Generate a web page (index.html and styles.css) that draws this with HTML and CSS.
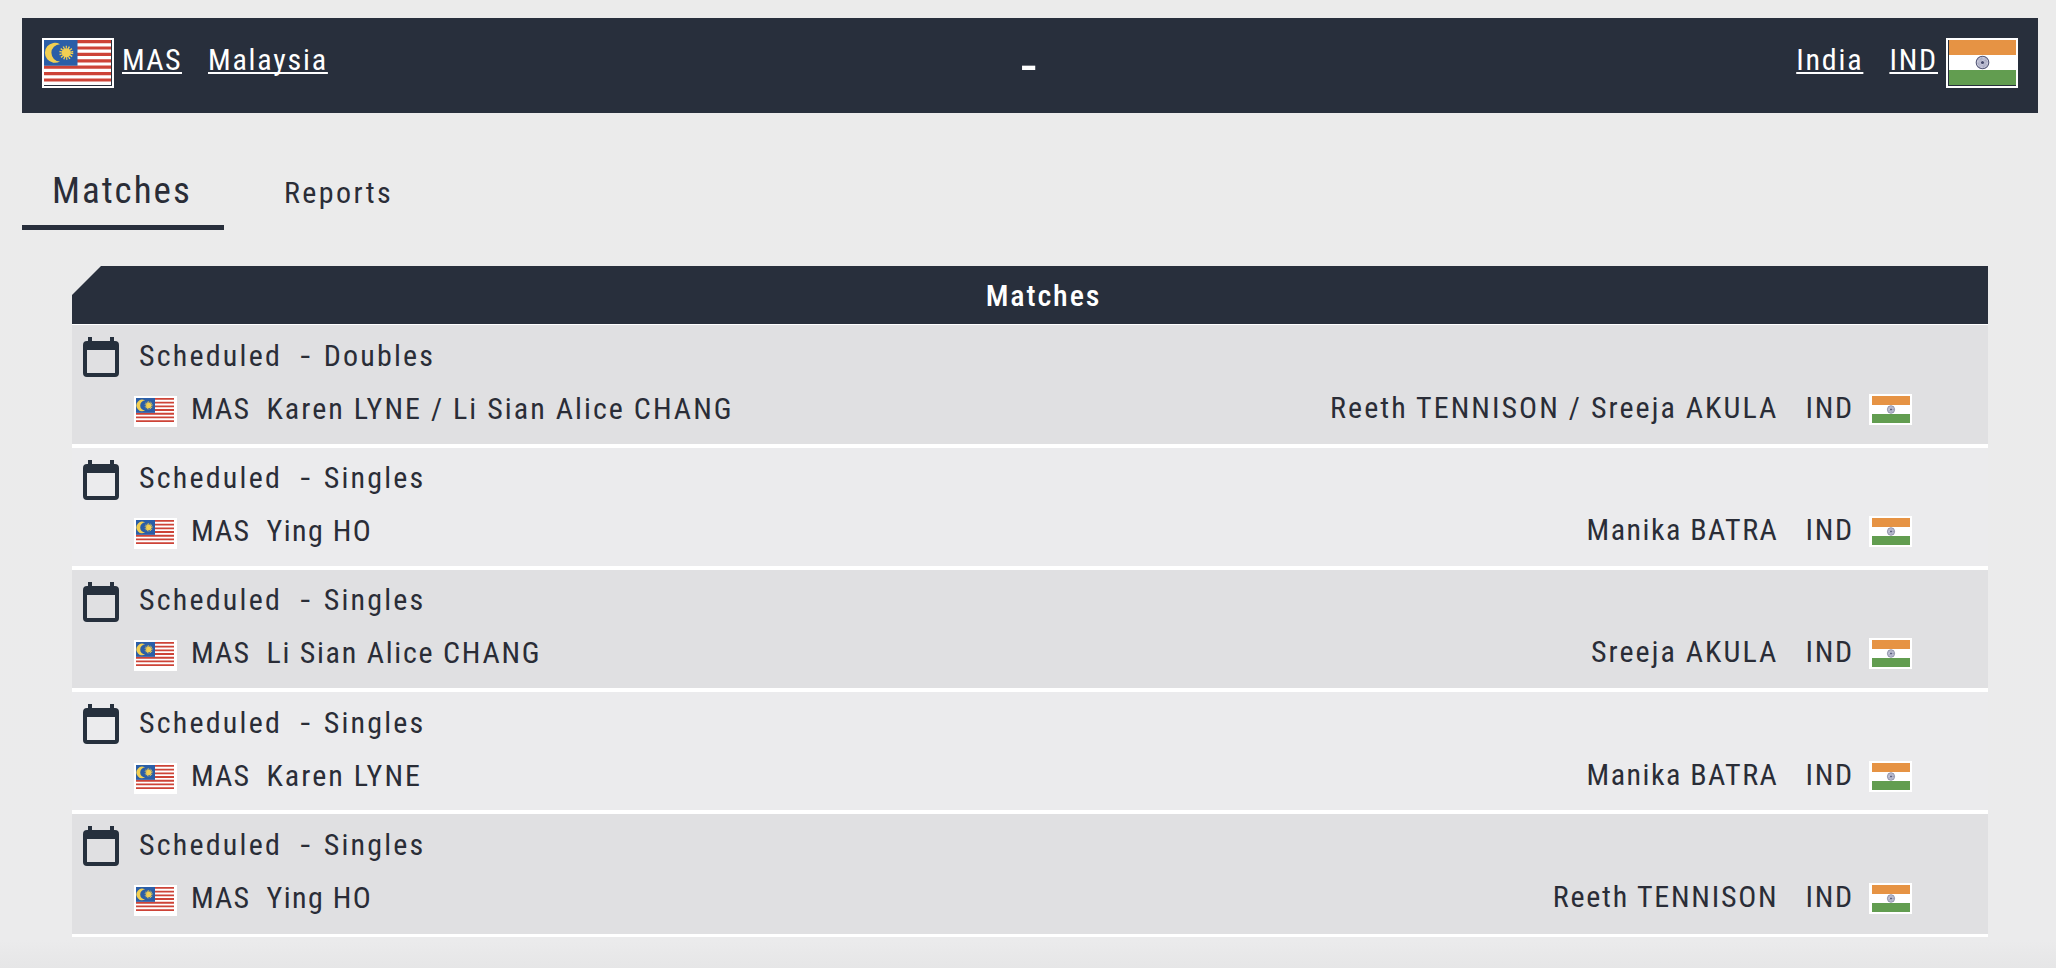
FILE: index.html
```
<!DOCTYPE html>
<html>
<head>
    <meta charset="UTF-8">
    <title>Malaysia - India</title>
    <link rel="stylesheet" href="styles.css">
</head>
<body>
    <!-- Shared icons -->
    <svg class="defs">
        <symbol id="mas" viewBox="0 0 67 45" preserveAspectRatio="none">
            <rect width="67" height="45" fill="#fff"/>
            <path d="M0 1.6H67M0 8H67M0 14.4H67M0 20.8H67M0 27.2H67M0 33.6H67M0 40H67" stroke="#cd4337" stroke-width="3.2"/>
            <rect width="33.5" height="25.7" fill="#2b5ea7"/>
            <path d="M16 4.2A10 10 0 1 0 16 21.4A8.6 8.6 0 1 1 16 4.2Z" fill="#f2cf52"/>
            <circle cx="22.3" cy="12.8" r="4.6" fill="#f2cf52"/>
            <circle cx="22.3" cy="12.8" r="5.6" fill="none" stroke="#f2cf52" stroke-width="2.8" stroke-dasharray="1.2 1.313"/>
        </symbol>
        <symbol id="ind" viewBox="0 0 67 45" preserveAspectRatio="none">
            <rect width="67" height="45" fill="#fff"/>
            <rect width="67" height="15" fill="#e69344"/>
            <rect y="30" width="67" height="15" fill="#629d50"/>
            <circle cx="33.5" cy="22.5" r="6.3" fill="#dadbe8" stroke="#555878" stroke-width="1.1"/>
            <circle cx="33.5" cy="22.5" r="3.6" fill="none" stroke="#9698b4" stroke-width="3.4" stroke-dasharray=".6 .5"/>
            <circle cx="33.5" cy="22.5" r="1.6" fill="#45496c"/>
        </symbol>
        <symbol id="calendar" viewBox="0 0 36 40">
            <path d="M5 0h4v4h18V0h4v4h1a4 4 0 0 1 4 4v28a4 4 0 0 1-4 4H4a4 4 0 0 1-4-4V8a4 4 0 0 1 4-4h1zM4 13v23h28V13z" fill="#26303d" fill-rule="evenodd"/>
        </symbol>
    </svg>

    <div class="header">
        <div class="team">
            <svg class="flag-big"><use href="#mas"/></svg>
            <a class="team-code">MAS</a>
            <a class="team-name">Malaysia</a>
        </div>
        <div class="result">-</div>
        <div class="team away">
            <a class="team-name">India</a>
            <a class="team-code">IND</a>
            <svg class="flag-big"><use href="#ind"/></svg>
        </div>
    </div>

    <div class="tabs">
        <div class="tab active">Matches</div>
        <div class="tab">Reports</div>
    </div>

    <div class="matches">
        <div class="matches-title">Matches</div>
        <!-- Match 1 -->
        <div class="match">
            <svg class="calendar"><use href="#calendar"/></svg>
            <div class="match-info">
                <div class="status"><span>Scheduled</span><span class="dash">-</span><span>Doubles</span></div>
                <div class="players">
                    <svg class="flag"><use href="#mas"/></svg>
                    <span class="code">MAS</span>
                    <span class="name">Karen LYNE / Li Sian Alice CHANG</span>
                    <span class="name right">Reeth TENNISON / Sreeja AKULA</span>
                    <span class="code right">IND</span>
                    <svg class="flag right"><use href="#ind"/></svg>
                </div>
            </div>
        </div>
        <!-- Match 2 -->
        <div class="match">
            <svg class="calendar"><use href="#calendar"/></svg>
            <div class="match-info">
                <div class="status"><span>Scheduled</span><span class="dash">-</span><span>Singles</span></div>
                <div class="players">
                    <svg class="flag"><use href="#mas"/></svg>
                    <span class="code">MAS</span>
                    <span class="name tight">Ying HO</span>
                    <span class="name right tight">Manika BATRA</span>
                    <span class="code right">IND</span>
                    <svg class="flag right"><use href="#ind"/></svg>
                </div>
            </div>
        </div>
        <!-- Match 3 -->
        <div class="match">
            <svg class="calendar"><use href="#calendar"/></svg>
            <div class="match-info">
                <div class="status"><span>Scheduled</span><span class="dash">-</span><span>Singles</span></div>
                <div class="players">
                    <svg class="flag"><use href="#mas"/></svg>
                    <span class="code">MAS</span>
                    <span class="name medium">Li Sian Alice CHANG</span>
                    <span class="name right">Sreeja AKULA</span>
                    <span class="code right">IND</span>
                    <svg class="flag right"><use href="#ind"/></svg>
                </div>
            </div>
        </div>
        <!-- Match 4 -->
        <div class="match">
            <svg class="calendar"><use href="#calendar"/></svg>
            <div class="match-info">
                <div class="status"><span>Scheduled</span><span class="dash">-</span><span>Singles</span></div>
                <div class="players">
                    <svg class="flag"><use href="#mas"/></svg>
                    <span class="code">MAS</span>
                    <span class="name">Karen LYNE</span>
                    <span class="name right tight">Manika BATRA</span>
                    <span class="code right">IND</span>
                    <svg class="flag right"><use href="#ind"/></svg>
                </div>
            </div>
        </div>
        <!-- Match 5 -->
        <div class="match">
            <svg class="calendar"><use href="#calendar"/></svg>
            <div class="match-info">
                <div class="status"><span>Scheduled</span><span class="dash">-</span><span>Singles</span></div>
                <div class="players">
                    <svg class="flag"><use href="#mas"/></svg>
                    <span class="code">MAS</span>
                    <span class="name tight">Ying HO</span>
                    <span class="name right medium">Reeth TENNISON</span>
                    <span class="code right">IND</span>
                    <svg class="flag right"><use href="#ind"/></svg>
                </div>
            </div>
        </div>
    </div>
</body>
</html>
```
FILE: styles.css
```
* {
    box-sizing: border-box;
}
body {
    margin: 0;
    padding: 18px 18px 0 22px;
    height: 968px;
    overflow: hidden;
    background: linear-gradient(#ebebeb, #ebebec 940px, #e6e6e7);
    color: #2a2d37;
    font-family: "Roboto Condensed", Roboto, sans-serif;
    font-stretch: 75%;
    font-size: 30px;
    letter-spacing: 1.8px;
    white-space: nowrap;
}
.defs {
    display: block;
    width: 0;
    height: 0;
}

/* Top bar */
.header {
    display: grid;
    grid-template-columns: 1fr auto 1fr;
    height: 95px;
    padding: 20px;
    background-color: #282f3c;
    color: white;
}
.team {
    display: flex;
    align-items: flex-start;
    line-height: 44px;
}
.away {
    justify-content: flex-end;
}
.team a {
    text-decoration: underline;
    text-decoration-thickness: 2px;
    text-underline-offset: 2px;
    text-decoration-skip-ink: none;
}
.flag-big {
    width: 72px;
    height: 50px;
    border: 2px solid white;
    padding: 0 1px 1px 0;
}
.team-code {
    margin-left: 8px;
    letter-spacing: 1.4px;
}
.team-name {
    margin-left: 26px;
    letter-spacing: 1.8px;
}
.away .team-code {
    margin-left: 26px;
    margin-right: 8px;
    letter-spacing: 1.8px;
}
.away .flag-big {
    padding: 0 0 1px 1px;
}
.result {
    margin-right: 3px;
    font-size: 44px;
    font-weight: 500;
    line-height: 56px;
    letter-spacing: 0;
    transform: scaleX(1.35);
}

/* Tabs */
.tabs {
    display: flex;
    height: 117px;
}
.tab {
    height: 117px;
    padding: 57px 0 0 60px;
    line-height: 46px;
    letter-spacing: 2.4px;
}
.tab.active {
    width: 202px;
    padding: 55px 0 0 30px;
    border-bottom: 5px solid #282f3c;
    font-size: 37px;
    letter-spacing: 2px;
}

/* Match list */
.matches {
    width: 1916px;
    margin: 36px 0 0 50px;
}
.matches-title {
    height: 58px;
    padding-left: 27px;
    background-color: #282f3c;
    clip-path: polygon(29px 0, 100% 0, 100% 100%, 0 100%, 0 29px);
    color: white;
    font-weight: 500;
    text-align: center;
    line-height: 60px;
    letter-spacing: 1.9px;
}
.match {
    display: flex;
    height: 122.3px;
    padding-left: 11px;
    border-bottom: 4px solid white;
    background-color: #ebebed;
}
.match:nth-child(even) {
    background-color: #e0e0e2;
}
.match:nth-child(2) {
    height: 123.5px;
    border-top: 1px solid white;
}
.match:last-child {
    border-bottom-width: 3px;
}
.calendar {
    width: 36px;
    height: 40px;
    margin: 12px 15px 0 0;
}
.match-info {
    flex: 1;
    padding: 3.6px 76px 0 0;
}
.status {
    margin-left: 5px;
    line-height: 54px;
    letter-spacing: 2.2px;
}
.dash {
    display: inline-block;
    margin: 0 12px 0 20px;
    transform: scaleX(1.35);
}
.players {
    display: flex;
    line-height: 52px;
}
.flag {
    width: 43px;
    height: 31px;
    margin-top: 13px;
    border: 2px solid white;
    border-right-width: 3px;
    border-bottom-width: 3px;
    background-color: white;
}
.code {
    margin-left: 14px;
    letter-spacing: 1.2px;
}
.name {
    margin-left: 16px;
    letter-spacing: 2.05px;
}
.medium {
    letter-spacing: 1.75px;
}
.tight {
    letter-spacing: 1.5px;
}
.right {
    line-height: 50px;
}
.name.right {
    margin-left: auto;
}
.code.right {
    margin-left: 27px;
    letter-spacing: 1.8px;
}
.flag.right {
    margin: 11px 0 0 15px;
    border: 2px solid white;
    border-left-width: 3px;
}
```
